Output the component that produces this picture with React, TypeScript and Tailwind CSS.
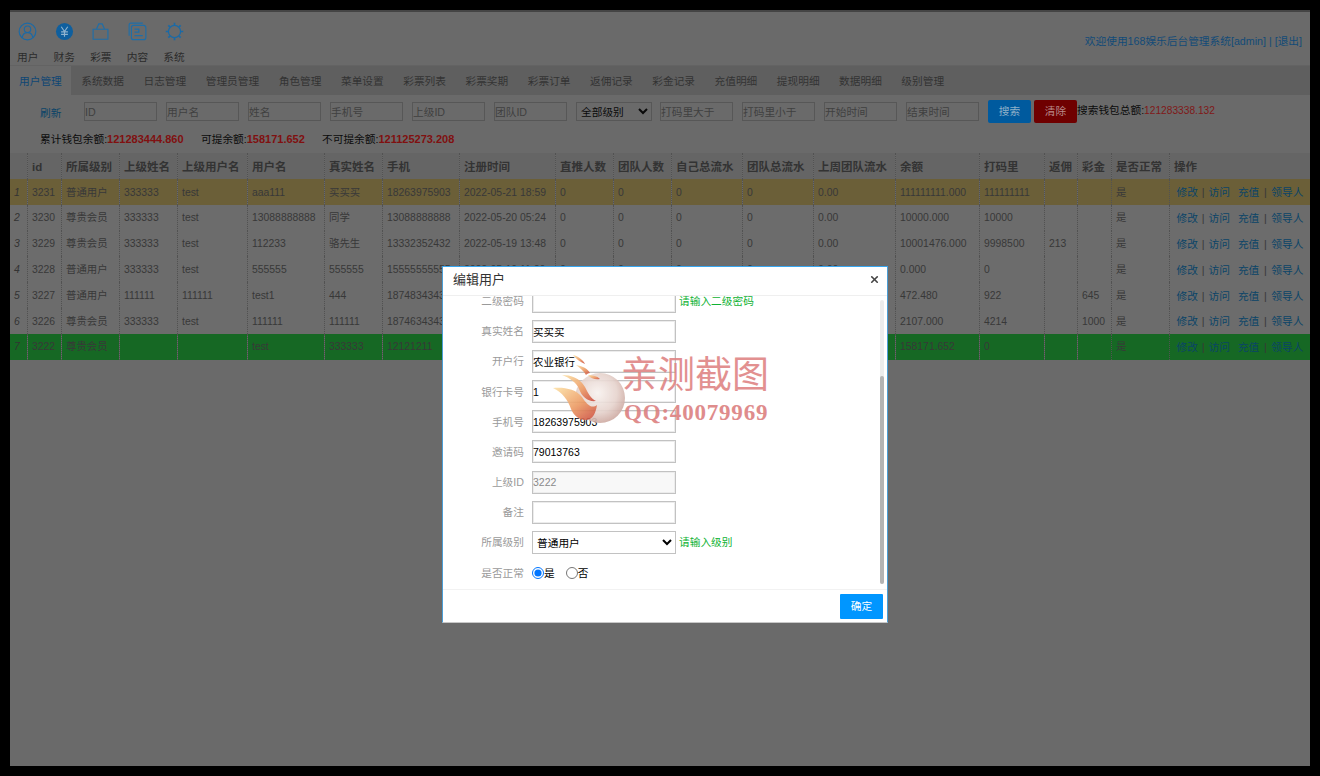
import React from "react";
import { X } from "lucide-react";

const sans = "font-['Liberation_Sans','Noto_Sans_CJK_SC',sans-serif]";

const navIcons = [
  <svg key="user" viewBox="0 0 20 20" className="w-[19px] h-[19px]" fill="none" stroke="#1b6aa6" strokeWidth="1.2">
    <circle cx="10" cy="10" r="8.8" />
    <circle cx="10" cy="7.6" r="3.4" />
    <path d="M4.4 16.4c.6-3.4 2.8-5.2 5.6-5.2s5 1.8 5.6 5.2" />
  </svg>,
  <svg key="yen" viewBox="0 0 20 20" className="w-[19px] h-[19px]">
    <circle cx="10" cy="10" r="9" fill="#0f5f9e" />
    <path d="M6.6 5l3.4 5 3.4-5M6.4 10.4h7.2M6.4 13h7.2M10 10v5.4" fill="none" stroke="#8fb3cf" strokeWidth="1.2" />
  </svg>,
  <svg key="bag" viewBox="0 0 20 20" className="w-[19px] h-[19px]" fill="none" stroke="#1f6ea8" strokeWidth="1.2">
    <path d="M2.2 7.6h15.6v10.6H2.2z" />
    <path d="M5.8 7.4l2.4-5.4h3.6l2.4 5.4" />
  </svg>,
  <svg key="files" viewBox="0 0 20 20" className="w-[19px] h-[19px]" fill="none" stroke="#1f6ea8" strokeWidth="1.2">
    <path d="M1.2 14.6V3c0-1 .7-1.8 1.8-1.8h12.6" />
    <rect x="3.6" y="3.6" width="15.2" height="15" rx="2.4" />
    <path d="M6.8 7.6h4.6v3h-4.6M6.8 14.4h8.8" strokeWidth="1.3" />
  </svg>,
  <svg key="gear" viewBox="0 0 20 20" className="w-[19px] h-[19px]" fill="none" stroke="#1b6aa6" strokeWidth="1.3">
    <circle cx="10" cy="10" r="6.4" />
    <path d="M10 .8v2.4M10 16.8v2.4M.8 10h2.4M16.8 10h2.4M3.5 3.5l1.7 1.7M14.8 14.8l1.7 1.7M3.5 16.5l1.7-1.7M14.8 5.2l1.7-1.7" strokeWidth="1.8" />
  </svg>,
];

const navLabels = ["用户", "财务", "彩票", "内容", "系统"];
const tabs = ["用户管理", "系统数据", "日志管理", "管理员管理", "角色管理", "菜单设置", "彩票列表", "彩票奖期", "彩票订单", "返佣记录", "彩金记录", "充值明细", "提现明细", "数据明细", "级别管理"];
const columns = [
  ["", 17], ["id", 34], ["所属级别", 58], ["上级姓名", 58], ["上级用户名", 70], ["用户名", 77], ["真实姓名", 58], ["手机", 77], ["注册时间", 96],
  ["直推人数", 58], ["团队人数", 58], ["自己总流水", 71], ["团队总流水", 71], ["上周团队流水", 82], ["余额", 84], ["打码里", 65], ["返佣", 33], ["彩金", 34], ["是否正常", 58], ["操作", 141],
] as const;

const rows = [
  ["3231", "普通用户", "333333", "test", "aaa111", "买买买", "18263975903", "2022-05-21 18:59", "0", "0", "0", "0", "0.00", "111111111.000", "111111111", "", ""],
  ["3230", "尊贵会员", "333333", "test", "13088888888", "同学", "13088888888", "2022-05-20 05:24", "0", "0", "0", "0", "0.00", "10000.000", "10000", "", ""],
  ["3229", "尊贵会员", "333333", "test", "112233", "骆先生", "13332352432", "2022-05-19 13:48", "0", "0", "0", "0", "0.00", "10001476.000", "9998500", "213", ""],
  ["3228", "普通用户", "333333", "test", "555555", "555555", "15555555555", "2022-05-19 11:20", "0", "0", "0", "0", "0.00", "0.000", "0", "", ""],
  ["3227", "普通用户", "111111", "111111", "test1", "444", "18748343434", "2022-05-18 20:11", "0", "0", "0", "0", "0.00", "472.480", "922", "", "645"],
  ["3226", "尊贵会员", "333333", "test", "111111", "111111", "18746343434", "2022-05-18 19:42", "0", "0", "0", "0", "0.00", "2107.000", "4214", "", "1000"],
  ["3222", "尊贵会员", "", "", "test", "333333", "12121211", "2022-05-18 12:06", "0", "0", "0", "0", "0.00", "158171.652", "0", "", ""],
];

const rowColor = (i: number) => {
  if (i === 0) return "bg-[#6b5f38]";
  if (i === 6) return "bg-[#166824]";
  return "bg-[#6c6c6c]";
};

const Filter = ({ ph }: { ph: string }) => (
  <input
    placeholder={ph}
    className="w-[73px] h-[19px] shrink-0 border border-[#575757] bg-transparent text-[10.7px] placeholder:text-[#404040] outline-none"
  />
);

const FormRow = ({ label, children, hint }: { label: string; children: React.ReactNode; hint?: string }) => (
  <div className="flex items-center h-[23px] mb-[7.2px]">
    <div className="w-[89px] shrink-0 pr-[8px] text-right text-[10.7px] text-[#9a9a9a]">{label}</div>
    {children}
    {hint && <span className="ml-[3px] text-[10.7px] text-[#0fb233]">{hint}</span>}
  </div>
);

const FormInput = ({ value = "", disabled = false }: { value?: string; disabled?: boolean }) => (
  <input
    readOnly
    value={value}
    className={`w-[144px] h-[23px] border border-[#c2c2c2] shadow-[0_0_0_1px_#ececec_inset] text-[10.5px] outline-none ${disabled ? "bg-[#f8f8f8] text-[#8a8a8a]" : "bg-white text-black"}`}
  />
);

const Watermark = () => (
  <div className="absolute left-[542px] top-[343px] w-[225px] h-[75px] pointer-events-none opacity-90">
    <svg viewBox="0 0 80 75" className="absolute left-0 top-0 w-[80px] h-[75px]">
      <defs>
        <radialGradient id="ball" cx="0.45" cy="0.4" r="0.65">
          <stop offset="0" stopColor="#f8f2ef" />
          <stop offset="0.6" stopColor="#e6d3cd" />
          <stop offset="1" stopColor="#c9a299" />
        </radialGradient>
        <linearGradient id="flame" x1="0" y1="0" x2="1" y2="1">
          <stop offset="0" stopColor="#fde3a8" />
          <stop offset="0.55" stopColor="#ec9a63" />
          <stop offset="1" stopColor="#c9483e" />
        </linearGradient>
      </defs>
      <circle cx="48" cy="45" r="25" fill="url(#ball)" />
      <path d="M1 35C12 34 24 36 30 44c5 8 10 12 15 8-1 5-2 11-7 14-8 3-15-1-19-10C16 47 10 39 1 35z" fill="url(#flame)" />
      <path d="M10 22c9 0 18 3 23 12 3 6 6 12 11 14-8 1-14-4-17-12-2-6-9-11-17-14z" fill="url(#flame)" />
      <path d="M24 12c6 1 11 3 14 8-2 0-3 1-4 2-2-4-6-7-10-10z" fill="url(#flame)" />
      <path d="M21 2c5 1 10 5 12 9-5-2-9-5-12-9z" fill="url(#flame)" />
      <path d="M36 22c5 0 9 1 12 4-4 1-9 0-12-4z" fill="url(#flame)" />
    </svg>
    <div className="absolute left-[69px] top-[-3px] whitespace-nowrap font-['Noto_Sans_CJK_SC',sans-serif] text-[37px] leading-[44px] font-normal text-[#df8585]">亲测截图</div>
    <div className="absolute left-[72px] top-[47px] whitespace-nowrap font-['Liberation_Serif',serif] text-[23px] leading-[26px] font-bold tracking-[0.8px] text-[#dc8080]">QQ:40079969</div>
  </div>
);

export default function App() {
  return (
    <div className={`${sans} w-[1320px] h-[776px] bg-black pt-[10px] px-[10px] pb-[10px] overflow-hidden`}>
      <div className="relative h-full bg-[#6a6a6a] overflow-hidden">
        {/* top nav */}
        <div className="h-[55px] border-t-2 border-[#444] flex justify-between">
          <div className="flex gap-[15.2px] pl-[7px] pt-[10px]">
            {navLabels.map((label, i) => (
              <div key={label} className="flex flex-col items-center w-[21.4px]">
                <div className="h-[19px]">{navIcons[i]}</div>
                <div className="mt-[9px] text-[10.7px] leading-[14px] whitespace-nowrap text-[#2a2a2a]">{label}</div>
              </div>
            ))}
          </div>
          <div className="pr-[8px] pt-[22px] text-[10.7px] leading-[14px] text-[#124a78]">欢迎使用168娱乐后台管理系统[admin] | [退出]</div>
        </div>

        {/* tabs */}
        <div className="h-[30px] flex bg-[#5f5f5f] border-t border-[#636363]">
          {tabs.map((t, i) => (
            <div
              key={t}
              className={`h-[30px] text-[10.7px] leading-[31px] whitespace-nowrap ${i === 0 ? "bg-[#6a6a6a] pl-[9px] pr-[9.7px] text-[#0e4674]" : "px-[9.75px] text-[#333]"}`}
            >
              {t}
            </div>
          ))}
        </div>

        {/* filters */}
        <div className="flex items-start h-[28px] pt-[5px] pl-[30px]">
          <div className="w-[44px] pt-[6px] text-[10.7px] leading-[14px] text-[#0a4468]">刷新</div>
          <div className="flex gap-[9px] pt-[2px]">
            <Filter ph="ID" />
            <Filter ph="用户名" />
            <Filter ph="姓名" />
            <Filter ph="手机号" />
            <Filter ph="上级ID" />
            <Filter ph="团队ID" />
            <select className="w-[76px] h-[19px] border border-[#575757] bg-transparent text-[10.7px] text-[#0a0a0a] outline-none">
              <option>全部级别</option>
            </select>
          </div>
          <div className="flex gap-[9px] pt-[2px] ml-[8px]">
            <Filter ph="打码里大于" />
            <Filter ph="打码里小于" />
            <Filter ph="开始时间" />
            <Filter ph="结束时间" />
          </div>
          <button className="ml-[9px] w-[43px] h-[23px] rounded-[2px] bg-[#005a9e] text-[10.7px] text-[#8fb0c8]">搜索</button>
          <button className="ml-[3px] w-[43px] h-[23px] rounded-[2px] bg-[#6f0000] text-[10.7px] text-[#b88a8a]">清除</button>
          <div className="text-[10.7px] leading-[14px] pt-[3px] whitespace-nowrap text-[#0a0a0a]">
            搜索钱包总额:<span className="text-[10.2px] text-[#801818]">121283338.132</span>
          </div>
        </div>

        {/* wallet stats */}
        <div className="flex h-[30px] pl-[30px] pt-[9px] text-[10.7px] leading-[14px] text-[#0a0a0a]">
          <div className="w-[161px]">累计钱包余额:<b className="text-[11px] text-[#801010]">121283444.860</b></div>
          <div className="w-[121px]">可提余额:<b className="text-[11px] text-[#801010]">158171.652</b></div>
          <div>不可提余额:<b className="text-[11px] text-[#801010]">121125273.208</b></div>
        </div>

        {/* table */}
        <table className="table-fixed border-collapse w-[1300px] text-[10.4px] text-[#383838]">
          <colgroup>
            {columns.map(([title, w], i) => (
              <col key={i} style={{ width: w }} />
            ))}
          </colgroup>
          <thead>
            <tr className="h-[26px] bg-[#656565]">
              {columns.map(([title], i) => (
                <th key={i} className="border-r border-dotted border-[#525252] px-[4.5px] pt-[3px] text-left text-[11.5px] font-bold whitespace-nowrap overflow-hidden text-[#333]">
                  {title}
                </th>
              ))}
            </tr>
          </thead>
          <tbody>
            {rows.map((row, i) => (
              <tr key={row[0]} className={`h-[25.8px] ${rowColor(i)}`}>
                <td className="border-r border-dotted border-[#525252] pl-[4px] pt-[1px] italic text-[#333]">{i + 1}</td>
                {row.map((cell, j) => (
                  <td key={j} className="border-r border-dotted border-[#525252] px-[4.5px] pt-[1px] whitespace-nowrap overflow-hidden">{cell}</td>
                ))}
                <td className="border-r border-dotted border-[#525252] px-[4.5px] pt-[1px]">是</td>
                <td className="pl-[7px] pt-[1px] whitespace-nowrap text-[10.7px] text-[#0a4468]">
                  修改<span className="inline-block w-[10.6px] text-center text-[#383838]">|</span>访问<span className="ml-[8px]">充值</span><span className="inline-block w-[12px] text-center text-[#383838]">|</span>领导人
                </td>
              </tr>
            ))}
          </tbody>
        </table>

        {/* edit user dialog */}
        <div className="absolute left-[432px] top-[256px] w-[446px] h-[357px] flex flex-col bg-white border border-[#4b9ed6] border-t-[#38a6f0] border-b-[#c8c8c8]">
          <div className="h-[29px] shrink-0 flex items-center justify-between pb-[3px] pl-[10px] pr-[7px] border-b border-[#efefef]">
            <span className="text-[13px] text-[#333]">编辑用户</span>
            <X size={11} strokeWidth={3.5} className="text-[#444]" />
          </div>
          <div className="relative h-[293px] overflow-hidden">
            <div className="-mt-[6.5px]">
              <FormRow label="二级密码" hint="请输入二级密码"><FormInput /></FormRow>
              <FormRow label="真实姓名"><FormInput value="买买买" /></FormRow>
              <FormRow label="开户行"><FormInput value="农业银行" /></FormRow>
              <FormRow label="银行卡号"><FormInput value="1" /></FormRow>
              <FormRow label="手机号"><FormInput value="18263975903" /></FormRow>
              <FormRow label="邀请码"><FormInput value="79013763" /></FormRow>
              <FormRow label="上级ID"><FormInput value="3222" disabled /></FormRow>
              <FormRow label="备注"><FormInput /></FormRow>
              <FormRow label="所属级别" hint="请输入级别">
                <select className="w-[144px] h-[23px] border border-[#c2c2c2] bg-white text-[10.7px] text-black outline-none">
                  <option>普通用户</option>
                </select>
              </FormRow>
              <FormRow label="是否正常">
                <label className="flex items-center text-[10.7px] text-black">
                  <input type="radio" name="normal" defaultChecked className="m-0 w-[12px] h-[12px]" />是
                </label>
                <label className="flex items-center ml-[11px] text-[10.7px] text-black">
                  <input type="radio" name="normal" className="m-0 w-[12px] h-[12px]" />否
                </label>
              </FormRow>
            </div>
            {/* scrollbar */}
            <div className="absolute right-[3px] top-[4px] w-[4px] h-[284px] rounded-full bg-[#ececec]">
              <div className="mt-[76px] h-[208px] rounded-full bg-[#b4b4b4]" />
            </div>
          </div>
          <div className="flex-1 flex justify-end items-start pt-[4px] pr-[4px] border-t border-[#f2f2f2]">
            <button className="w-[43px] h-[25px] rounded-[1px] bg-[#0096ff] text-[10.7px] text-white">确定</button>
          </div>
        </div>

        <Watermark />
      </div>
    </div>
  );
}
